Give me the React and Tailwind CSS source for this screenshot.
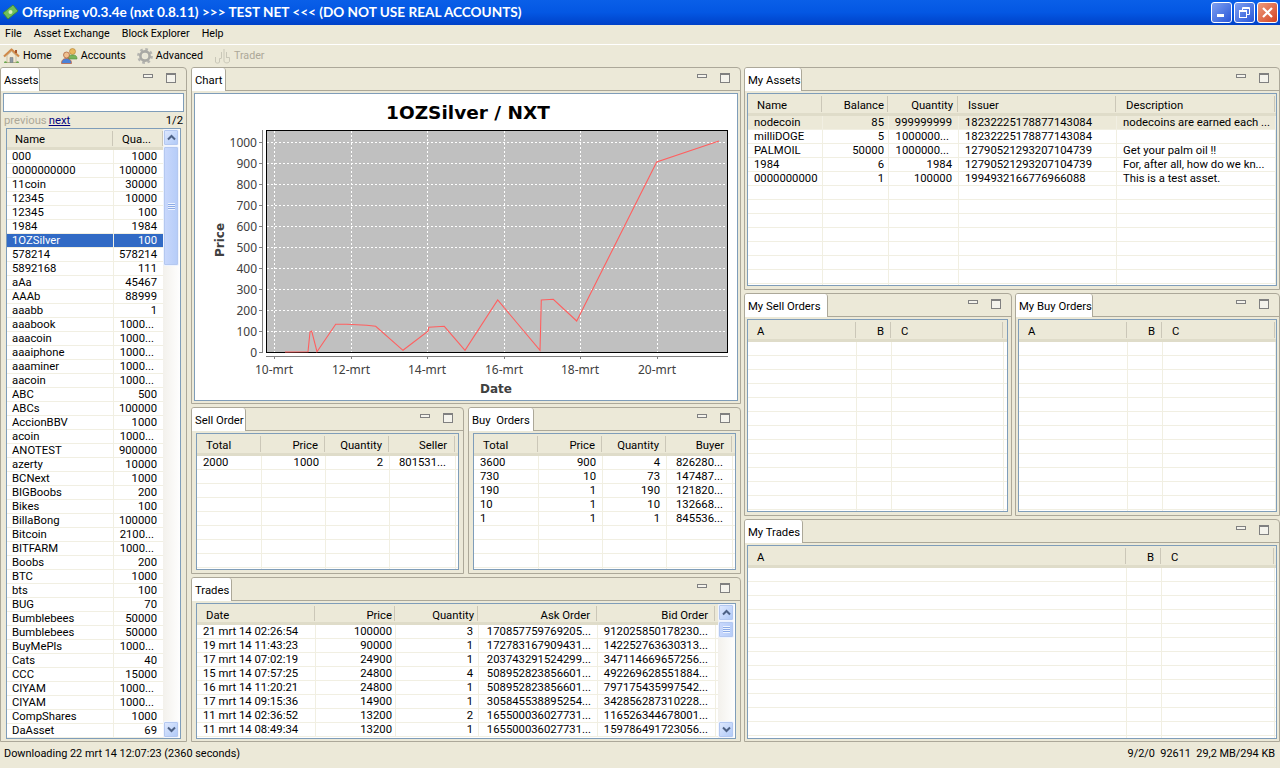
import React from "react";

const font = "font-['Roboto',sans-serif]";
const chartFont = "Noto Sans";

const assets = [
  ["000", "1000"],
  ["0000000000", "100000"],
  ["11coin", "30000"],
  ["12345", "10000"],
  ["12345", "100"],
  ["1984", "1984"],
  ["1OZSilver", "100"],
  ["578214", "578214"],
  ["5892168", "111"],
  ["aAa", "45467"],
  ["AAAb", "88999"],
  ["aaabb", "1"],
  ["aaabook", "1000..."],
  ["aaacoin", "1000..."],
  ["aaaiphone", "1000..."],
  ["aaaminer", "1000..."],
  ["aacoin", "1000..."],
  ["ABC", "500"],
  ["ABCs", "100000"],
  ["AccionBBV", "1000"],
  ["acoin", "1000..."],
  ["ANOTEST", "900000"],
  ["azerty", "10000"],
  ["BCNext", "1000"],
  ["BIGBoobs", "200"],
  ["Bikes", "100"],
  ["BillaBong", "100000"],
  ["Bitcoin", "2100..."],
  ["BITFARM", "1000..."],
  ["Boobs", "200"],
  ["BTC", "1000"],
  ["bts", "100"],
  ["BUG", "70"],
  ["Bumblebees", "50000"],
  ["Bumblebees", "50000"],
  ["BuyMePls", "1000..."],
  ["Cats", "40"],
  ["CCC", "15000"],
  ["CIYAM", "1000..."],
  ["CIYAM", "1000..."],
  ["CompShares", "1000"],
  ["DaAsset", "69"],
];

const trades = [
  ["21 mrt 14 02:26:54", "100000", "3", "170857759769205...", "912025850178230..."],
  ["19 mrt 14 11:43:23", "90000", "1", "172783167909431...", "142252763630313..."],
  ["17 mrt 14 07:02:19", "24900", "1", "203743291524299...", "347114669657256..."],
  ["15 mrt 14 07:57:25", "24800", "4", "508952823856601...", "492269628551884..."],
  ["16 mrt 14 11:20:21", "24800", "1", "508952823856601...", "797175435997542..."],
  ["17 mrt 14 09:15:36", "14900", "1", "305845538895254...", "342856287310228..."],
  ["11 mrt 14 02:36:52", "13200", "2", "165500036027731...", "116526344678001..."],
  ["11 mrt 14 08:49:34", "13200", "1", "165500036027731...", "159786491723056..."],
];

const myAssets = [
  ["nodecoin", "85", "999999999", "18232225178877143084", "nodecoins are earned each ..."],
  ["milliDOGE", "5", "1000000...", "18232225178877143084", ""],
  ["PALMOIL", "50000", "1000000...", "12790521293207104739", "Get your palm oil !!"],
  ["1984", "6", "1984", "12790521293207104739", "For, after all, how do we kn..."],
  ["0000000000", "1", "100000", "1994932166776966088", "This is a test asset."],
];

const chartLine =
  "285,352 308,351.7 310,332 311.7,331 317,351.7 335.7,324.3 346.7,324.3 366.7,325.3 375.7,326.3 403,350.3 428.3,331 428.7,327.3 444.3,326.3 465,350.3 497.7,300 540,350.3 541.3,300 553.3,299.3 576.7,321 656.7,162 719,141";

function Chevron({ up }) {
  return (
    <svg width="9" height="7" viewBox="0 0 9 7">
      <path
        d={up ? "M1 5.5 L4.5 2 L8 5.5" : "M1 1.5 L4.5 5 L8 1.5"}
        fill="none"
        stroke="#4d6185"
        strokeWidth="2"
      />
    </svg>
  );
}

function ScrollButton({ up }) {
  return (
    <div className="h-[17px] w-[16px] shrink-0 rounded-[2px] border border-[#f3f6fd] bg-gradient-to-br from-[#e1eafe] to-[#aec8f7] flex items-center justify-center shadow-[0_0_0_1px_#b4c8f0_inset]">
      <Chevron up={up} />
    </div>
  );
}

function Scrollbar({ thumb }) {
  return (
    <div className="w-[17px] shrink-0 flex flex-col bg-gradient-to-r from-[#f3f1ec] to-[#fefefe]">
      <ScrollButton up />
      <div className={`${thumb} w-[16px] shrink-0 rounded-[2px] border border-[#eef3fe] bg-gradient-to-r from-[#c9d8fc] to-[#b5ccf8] flex items-center justify-center shadow-[0_0_0_1px_#b4c8f0_inset]`}>
        <div className="w-[7px] h-[7px] bg-[repeating-linear-gradient(#eef4fe_0px,#eef4fe_1px,#8caae6_1px,#8caae6_2px)]" />
      </div>
      <div className="flex-1" />
      <ScrollButton />
    </div>
  );
}

// cols: grid-cols class, columns: [{label, right, cellRight, hp, cp, tp}]
// hp = header right pad, cp = cell right pad, tp = cell right pad when the value is cut with "..."
function Table({ cols, columns, rows, emptyRows = 0, selected, selectedClass, scroll, headHeight = "h-[22px]", headLeading = "leading-[24px]", tight, className = "" }) {
  const all = [...rows, ...Array.from({ length: emptyRows }, () => columns.map(() => ""))];
  return (
    <div className={`border border-[#7f9db9] bg-white flex overflow-hidden ${className}`}>
      <div className="flex-1 min-w-0 flex flex-col overflow-hidden">
        <div className={`grid ${cols} ${headHeight} shrink-0 bg-[#ece9d8] border-b-[3px] border-[#dfdcc9]`}>
          {columns.map((c, i) => (
            <div
              key={i}
              className={`relative h-full ${headLeading} whitespace-nowrap overflow-hidden ${c.right ? `text-right ${c.hp || "pr-[8px]"}` : tight ? "pl-[8px]" : "pl-[9px]"}`}
            >
              {c.label}
              <div className="absolute right-0 top-[2px] bottom-[1px] w-[2px] border-l border-[#cbc7b8]" />
            </div>
          ))}
        </div>
        <div className="flex-1 overflow-hidden">
          {all.map((r, i) => (
            <div
              key={i}
              className={`grid ${cols} h-[14px] leading-[13px] border-b border-[#f1efe2] ${i === selected ? selectedClass : ""}`}
            >
              {r.map((v, j) => {
                const c = columns[j];
                let align = tight ? "pl-[5px]" : "pl-[6px]";
                if (c.right || c.cellRight) {
                  const pad = v.endsWith("...") ? c.tp || "pr-[9px]" : c.cp || "pr-[6px]";
                  align = `text-right ${pad}`;
                }
                return (
                  <div key={j} className={`h-[14px] whitespace-nowrap overflow-hidden border-r border-[#f1efe2] ${align}`}>
                    {v}
                  </div>
                );
              })}
            </div>
          ))}
        </div>
      </div>
      {scroll}
    </div>
  );
}

function Panel({ title, tabWidth, className = "", bodyClass = "", children }) {
  return (
    <div className={`flex flex-col border border-[#aca899] rounded-tr-[4px] rounded-tl-[3px] overflow-hidden ${className}`}>
      <div className="flex h-[23px] shrink-0">
        <div className={`${tabWidth} h-[23px] bg-white border-r border-[#aca899] rounded-tr-[3px] pl-[3px] pt-[5px] leading-[15px] whitespace-pre`}>
          {title}
        </div>
        <div className="flex-1 flex items-start justify-end gap-[13px] pr-[10px] pt-[5px] border-b border-[#aca899]">
          <div className="mt-[1px] w-[10px] h-[4px] border border-[#808080] bg-[#f4f3ec]" />
          <div className="w-[10px] h-[10px] border border-[#808080] border-t-2 bg-[#f4f3ec]" />
        </div>
      </div>
      <div className={`flex-1 min-h-0 flex flex-col ${bodyClass}`}>{children}</div>
    </div>
  );
}

function MoneyIcon() {
  return (
    <svg width="17" height="17" viewBox="0 0 17 17">
      <path d="M1 9 L11 1 L16 7 L6 15 Z" fill="#6fbf5a" stroke="#3f8a3a" />
      <circle cx="8.5" cy="8" r="2" fill="#d6efc0" />
    </svg>
  );
}

function HomeIcon() {
  return (
    <svg width="17" height="16" viewBox="0 0 17 16">
      <path d="M1 15 C1 13 3 13 4 14 L13 14 C14 13 16 13 16 15 Z" fill="#6aa84f" />
      <path d="M4 7.5 V14.5 H13 V7.5 L8.5 3.5 Z" fill="#f1e9d2" stroke="#b5a885" strokeWidth="0.6" />
      <path d="M7 14.5 V9.5 H10 V14.5 Z" fill="#8d99a3" stroke="#6c7680" strokeWidth="0.5" />
      <path d="M1 8.5 L8.5 1.5 L16 8.5" fill="none" stroke="#cf8a4a" strokeWidth="2.2" strokeLinejoin="round" />
      <rect x="12" y="2" width="2" height="3" fill="#a5552a" />
    </svg>
  );
}

function AccountsIcon() {
  return (
    <svg width="17" height="16" viewBox="0 0 17 16">
      <circle cx="11.5" cy="3.5" r="3" fill="#e9b75c" stroke="#b07f30" strokeWidth="0.6" />
      <path d="M7 11 C7 7.5 9 7 11.5 7 C14 7 16 7.5 16 11 Z" fill="#79b45a" stroke="#4d8a3b" strokeWidth="0.6" />
      <circle cx="5.5" cy="7" r="3" fill="#efc08f" stroke="#a8562f" strokeWidth="0.7" />
      <path d="M0.5 15.5 C0.5 11.5 3 10.5 5.5 10.5 C8 10.5 10.5 11.5 10.5 15.5 Z" fill="#4b82d8" stroke="#c05a30" strokeWidth="0.7" />
    </svg>
  );
}

function GearIcon() {
  return (
    <svg width="16" height="16" viewBox="0 0 16 16">
      <circle cx="8" cy="8" r="6.6" fill="none" stroke="#b4b4b0" strokeWidth="2.6" strokeDasharray="2.6 2.6" />
      <circle cx="8" cy="8" r="4.6" fill="none" stroke="#a9a9a5" strokeWidth="2.6" />
      <circle cx="8" cy="8" r="2" fill="#e8e6da" />
    </svg>
  );
}

function TraderIcon() {
  return (
    <svg width="17" height="16" viewBox="0 0 17 16" fill="none" stroke="#c9c7b8" strokeWidth="1">
      <path d="M1.5 9 V14 C1.5 15.5 5.5 15.5 5.5 14 V10.5 H7.5" />
      <path d="M10 1 V13 C10 15.5 15.5 15.5 15.5 13 V9.5 H12" />
      <path d="M7.5 4 V10 M12.5 4 V9" />
    </svg>
  );
}

function Chart() {
  const yTicks = [0, 100, 200, 300, 400, 500, 600, 700, 800, 900, 1000];
  const xTicks = [
    [274, "10-mrt"],
    [351, "12-mrt"],
    [427, "14-mrt"],
    [504, "16-mrt"],
    [580, "18-mrt"],
    [657, "20-mrt"],
  ];
  return (
    <svg viewBox="195 94 541 305" width="541" height="305" className="block">
      <text x="468" y="119" textAnchor="middle" fontSize="18.5" fontWeight="700" fill="#000" fontFamily="DejaVu Sans">
        1OZSilver / NXT
      </text>
      <rect x="266.5" y="130.5" width="461" height="222" fill="#c0c0c0" />
      {yTicks.map((t) => {
        const y = Math.round(352 - t * 0.2103) + 0.5;
        return (
          <g key={t}>
            {t > 0 && <line x1="267" x2="727" y1={y} y2={y} stroke="#fff" strokeDasharray="2 2" />}
            <line x1="259" x2="262" y1={y} y2={y} stroke="#808080" />
            <text x="257" y={y + 4} textAnchor="end" fontSize="12" fill="#404040" fontFamily={chartFont}>
              {t}
            </text>
          </g>
        );
      })}
      <line x1="262.5" x2="262.5" y1="130" y2="353" stroke="#808080" />
      <line x1="266" x2="728" y1="356.5" y2="356.5" stroke="#808080" />
      {xTicks.map(([x, label]) => (
        <g key={label}>
          <line x1={x + 0.5} x2={x + 0.5} y1="131" y2="352" stroke="#fff" strokeDasharray="2 2" />
          <line x1={x + 0.5} x2={x + 0.5} y1="356" y2="359" stroke="#808080" />
          <text x={x} y="374" textAnchor="middle" fontSize="12" fill="#404040" fontFamily={chartFont}>
            {label}
          </text>
        </g>
      ))}
      <rect x="266.5" y="130.5" width="461" height="222" fill="none" stroke="#000" />
      <polyline points={chartLine} fill="none" stroke="#ff5f5f" strokeWidth="1.1" />
      <text x="496" y="393" textAnchor="middle" fontSize="12" fontWeight="700" fill="#404040" fontFamily="DejaVu Sans">
        Date
      </text>
      <text transform="translate(224,240) rotate(-90)" textAnchor="middle" fontSize="12" fontWeight="700" fill="#404040" fontFamily="DejaVu Sans">
        Price
      </text>
    </svg>
  );
}

const L = (label) => ({ label });
const R = (label, extra = {}) => ({ label, right: true, ...extra });

function App() {
  return (
    <div className={`w-[1280px] h-[768px] overflow-hidden flex flex-col bg-[#ece9d8] text-black text-[11.3px] ${font}`}>
      {/* title bar */}
      <div className="h-[25px] shrink-0 flex items-center pl-[2px] pr-[2px] bg-gradient-to-b from-[#0a5fe8] via-[#0457e3] to-[#0041c8]">
        <MoneyIcon />
        <div className="ml-[3px] pb-[1px] text-white font-bold text-[13.6px] font-['Lato',sans-serif] whitespace-nowrap">
          Offspring v0.3.4e (nxt 0.8.11) &gt;&gt;&gt; TEST NET &lt;&lt;&lt; (DO NOT USE REAL ACCOUNTS)
        </div>
        <div className="ml-auto flex gap-[2px]">
          <div className="w-[21px] h-[21px] rounded-[3px] border border-white bg-gradient-to-br from-[#7f9ff0] to-[#2a55d8] flex items-end pl-[5px] pb-[5px]">
            <div className="w-[7px] h-[3px] bg-white" />
          </div>
          <div className="w-[21px] h-[21px] rounded-[3px] border border-white bg-gradient-to-br from-[#7f9ff0] to-[#2a55d8] flex items-center justify-center">
            <svg width="13" height="13" viewBox="0 0 13 13" fill="none" stroke="#fff" strokeWidth="1">
              <rect x="1.5" y="4.5" width="7" height="7" />
              <path d="M1.5 5.5 H8.5" />
              <path d="M4.5 4 V1.5 H11.5 V8.5 H9 M4.5 2.5 H11.5" />
            </svg>
          </div>
          <div className="w-[21px] h-[21px] rounded-[3px] border border-white bg-gradient-to-br from-[#ec9a7c] to-[#d2401c] flex items-center justify-center">
            <svg width="13" height="13" viewBox="0 0 13 13">
              <path d="M2 2 L11 11 M11 2 L2 11" stroke="#fff" strokeWidth="2.2" />
            </svg>
          </div>
        </div>
      </div>

      {/* menu */}
      <div className="h-[20px] shrink-0 flex items-center gap-[12px] pl-[5px] border-b border-white text-[10.7px]">
        <span>File</span>
        <span>Asset Exchange</span>
        <span>Block Explorer</span>
        <span>Help</span>
      </div>

      {/* toolbar */}
      <div className="h-[22px] shrink-0 flex items-center pl-[3px] text-[10.7px]">
        <div className="flex items-center gap-[3px] mr-[9px]">
          <HomeIcon />
          <span>Home</span>
        </div>
        <div className="flex items-center gap-[3px] mr-[11px]">
          <AccountsIcon />
          <span>Accounts</span>
        </div>
        <div className="flex items-center gap-[3px] mr-[11px]">
          <GearIcon />
          <span>Advanced</span>
        </div>
        <div className="flex items-center gap-[3px] text-[#aca899]">
          <TraderIcon />
          <span>Trader</span>
        </div>
      </div>

      {/* panels */}
      <div className="h-[675px] shrink-0 flex">
        <Panel title="Assets" tabWidth="w-[39px]" className="w-[187px] shrink-0">
          <div className="mx-[2px] mt-[2px] h-[19px] shrink-0 bg-white border border-[#7f9db9]" />
          <div className="h-[16px] shrink-0 flex items-center pl-[3px] pr-[3px] pt-[3px]">
            <span className="text-[#aca899]">previous</span>
            <span className="ml-[2px] text-[#000080] underline">next</span>
            <span className="ml-auto">1/2</span>
          </div>
          <Table
            className="mx-[5px] h-[611px] shrink-0"
            cols="grid-cols-[107px_50px]"
            columns={[L("Name"), { label: "Qua...", cellRight: true }]}
            rows={assets}
            selected={6}
            selectedClass="bg-[#316ac5] text-white"
            headHeight="h-[21px]"
            headLeading="leading-[22px]"
            tight
            scroll={<Scrollbar thumb="h-[120px]" />}
          />
        </Panel>

        <div className="w-[550px] shrink-0 ml-[4px] flex flex-col gap-[3px]">
          <Panel title="Chart" tabWidth="w-[34px]" className="h-[337px] shrink-0" bodyClass="p-[2px]">
            <div className="border border-[#7f9db9] bg-white flex-1 overflow-hidden">
              <Chart />
            </div>
          </Panel>
          <div className="h-[167px] shrink-0 flex gap-[4px]">
            <Panel title="Sell Order" tabWidth="w-[54px]" className="w-[273px] shrink-0" bodyClass="pt-[2px] pb-[3px] px-[4px]">
              <Table
                className="flex-1 min-h-0"
                cols="grid-cols-[65px_64px_64px_66px]"
                columns={[L("Total"), R("Price"), R("Quantity"), R("Seller", { hp: "pr-[9px]" })]}
                rows={[["2000", "1000", "2", "801531..."]]}
                emptyRows={8}
              />
            </Panel>
            <Panel title="Buy  Orders" tabWidth="w-[65px]" className="flex-1" bodyClass="pt-[2px] pb-[3px] px-[4px]">
              <Table
                className="flex-1 min-h-0"
                cols="grid-cols-[65px_64px_64px_66px]"
                columns={[L("Total"), R("Price"), R("Quantity"), R("Buyer", { hp: "pr-[9px]" })]}
                rows={[
                  ["3600", "900", "4", "826280..."],
                  ["730", "10", "73", "147487..."],
                  ["190", "1", "190", "121820..."],
                  ["10", "1", "10", "132668..."],
                  ["1", "1", "1", "845536..."],
                ]}
                emptyRows={4}
              />
            </Panel>
          </div>
          <Panel title="Trades" tabWidth="w-[40px]" className="h-[165px] shrink-0" bodyClass="pt-[2px] pb-[2px] px-[4px]">
            <Table
              className="flex-1 min-h-0"
              cols="grid-cols-[119px_80px_83px_119px_118px]"
              columns={[
                L("Date"),
                R("Price", { hp: "pr-[4px]", cp: "pr-[3px]" }),
                R("Quantity", { hp: "pr-[5px]", cp: "pr-[5px]" }),
                R("Ask Order", { tp: "pr-[6px]" }),
                R("Bid Order", { tp: "pr-[7px]" }),
              ]}
              rows={trades}
              headHeight="h-[21px]"
              scroll={<Scrollbar thumb="h-[17px]" />}
            />
          </Panel>
        </div>

        <div className="w-[536px] shrink-0 ml-[3px] flex flex-col gap-[3px]">
          <Panel title="My Assets" tabWidth="w-[57px]" className="h-[223px] shrink-0" bodyClass="pt-[2px] pb-[3px] px-[2px]">
            <Table
              className="flex-1 min-h-0"
              cols="grid-cols-[75px_66px_70px_158px_159px]"
              columns={[
                L("Name"),
                R("Balance", { hp: "pr-[5px]", cp: "pr-[4px]" }),
                R("Quantity", { hp: "pr-[6px]" }),
                L("Issuer"),
                L("Description"),
              ]}
              rows={myAssets}
              emptyRows={8}
              selected={0}
              selectedClass="bg-[#ece9d8]"
            />
          </Panel>
          <div className="h-[223px] shrink-0 flex gap-[3px]">
            <Panel title="My Sell Orders" tabWidth="w-[83px]" className="w-[268px] shrink-0" bodyClass="pt-[2px] pb-[3px] pl-[2px] pr-[3px]">
              <Table
                className="flex-1 min-h-0"
                cols="grid-cols-[109px_35px_112px]"
                columns={[L("A"), R("B"), L("C")]}
                rows={[]}
                emptyRows={13}
              />
            </Panel>
            <Panel title="My Buy Orders" tabWidth="w-[77px]" className="flex-1" bodyClass="pt-[2px] pb-[3px] px-[2px]">
              <Table
                className="flex-1 min-h-0"
                cols="grid-cols-[109px_35px_113px]"
                columns={[L("A"), R("B"), L("C")]}
                rows={[]}
                emptyRows={13}
              />
            </Panel>
          </div>
          <Panel title="My Trades" tabWidth="w-[58px]" className="h-[223px] shrink-0" bodyClass="pt-[2px] pb-[2px] px-[2px]">
            <Table
              className="flex-1 min-h-0"
              cols="grid-cols-[379px_35px_113px]"
              columns={[L("A"), R("B"), L("C")]}
              rows={[]}
              emptyRows={13}
            />
          </Panel>
        </div>
      </div>

      {/* status bar */}
      <div className="flex-1 flex items-center pl-[4px] pr-[5px] pb-[1px] text-[10.9px]">
        <span>Downloading 22 mrt 14 12:07:23 (2360 seconds)</span>
        <span className="ml-auto">9/2/0&nbsp; 92611&nbsp; 29,2 MB/294 KB</span>
      </div>
    </div>
  );
}

export default App;
